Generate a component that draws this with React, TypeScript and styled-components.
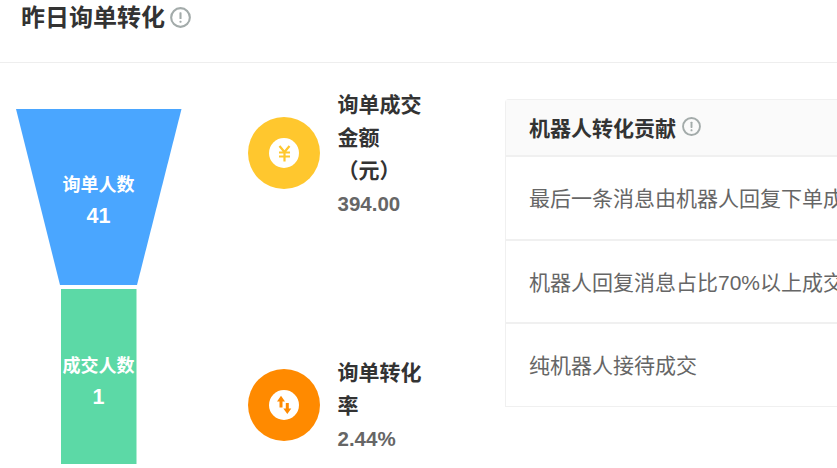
import React from "react";
import styled, { createGlobalStyle } from "styled-components";

const Global = createGlobalStyle`
  html, body { margin: 0; padding: 0; background: #fff; }
  body { font-family: "Liberation Sans", "Noto Sans CJK SC", sans-serif; overflow: hidden; }
`;

const Page = styled.div`
  width: 837px;
  height: 468px;
  overflow: hidden;
  display: flex;
  flex-direction: column;
`;

const Header = styled.header`
  height: 63px;
  box-sizing: border-box;
  border-bottom: 1px solid #eeeeee;
  padding: 0 0 27px 21px;
  display: flex;
  align-items: center;
  gap: 5px;
  flex: none;
`;

const Title = styled.h1`
  margin: 0;
  font-size: 24px;
  line-height: 36px;
  font-weight: 700;
  color: #333333;
`;

const Body = styled.main`
  display: flex;
  align-items: flex-start;
  flex: 1;
  min-height: 0;
`;

const FunnelBox = styled.div`
  position: relative;
  flex: none;
  width: 197px;
  height: 405px;
`;

const FunnelLabel = styled.div<{ $top: number }>`
  position: absolute;
  left: 0;
  width: 197px;
  top: ${(p) => p.$top}px;
  text-align: center;
  color: #fff;
  font-size: 18px;
  line-height: 32px;
  font-weight: 700;
`;

const FunnelCount = styled.div`
  font-size: 21.5px;
  margin-top: -1px;
`;

const Metrics = styled.section`
  flex: none;
  width: 308px;
  padding: 25px 0 0 51px;
  box-sizing: border-box;
  display: flex;
  flex-direction: column;
  gap: 135px;
`;

const Metric = styled.div`
  display: flex;
  align-items: center;
  gap: 17.5px;
`;

const Badge = styled.div<{ $color: string; $lift: number }>`
  flex: none;
  width: 72px;
  height: 72px;
  margin-bottom: ${(p) => p.$lift}px;
  border-radius: 50%;
  background: ${(p) => p.$color};
  display: flex;
  align-items: center;
  justify-content: center;
`;

const BadgeInner = styled.div`
  width: 30px;
  height: 30px;
  border-radius: 50%;
  background: #fff;
  display: flex;
  align-items: center;
  justify-content: center;
`;

const MetricText = styled.div`
  width: 88px;
`;

const MetricName = styled.div`
  font-size: 21px;
  line-height: 33px;
  font-weight: 700;
  color: #333333;
`;

const MetricValue = styled.div`
  font-size: 20.5px;
  line-height: 34px;
  font-weight: 700;
  color: #666666;
`;

const Table = styled.section`
  flex: none;
  width: 420px;
  margin-top: 36px;
  box-sizing: border-box;
  border: 1px solid #f0f0f0;
  border-right: none;
  border-radius: 4px 0 0 0;
`;

const TableHead = styled.div`
  height: 57px;
  box-sizing: border-box;
  background: #fafafa;
  border-bottom: 2px solid #f0f0f0;
  padding: 0 0 2px 23px;
  display: flex;
  align-items: center;
  gap: 6px;
`;

const TableTitle = styled.div`
  font-size: 21px;
  font-weight: 700;
  color: #333333;
`;

const Row = styled.div`
  height: 83px;
  box-sizing: border-box;
  padding: 0 0 2px 23px;
  display: flex;
  align-items: center;
  border-bottom: 2px solid #f0f0f0;
  font-size: 21px;
  color: #666666;
  white-space: nowrap;
  &:nth-child(2) { height: 84px; }
  &:last-child { border-bottom: none; height: 82px; }
`;

const InfoIcon = ({ size }: { size: number }) => (
  <svg width={size} height={size} viewBox="0 0 20 20" fill="none">
    <circle cx="10" cy="10" r="8.9" stroke="#a3abaa" strokeWidth="2" />
    <rect x="9" y="5" width="2" height="6.5" rx="0.6" fill="#a3abaa" />
    <rect x="9" y="13" width="2" height="2" rx="0.6" fill="#a3abaa" />
  </svg>
);

export default function App() {
  return (
    <Page>
      <Global />
      <Header>
        <Title>昨日询单转化</Title>
        <InfoIcon size={21} />
      </Header>
      <Body>
        <FunnelBox>
          <svg width="197" height="405" viewBox="0 0 197 405">
            <polygon points="16,46 181.500,46 137,222 60,222" fill="#4aa6ff" />
            <rect x="61" y="226" width="75.5" height="175" fill="#5cd9a6" />
          </svg>
          <FunnelLabel $top={106}>询单人数<FunnelCount>41</FunnelCount></FunnelLabel>
          <FunnelLabel $top={287}>成交人数<FunnelCount>1</FunnelCount></FunnelLabel>
        </FunnelBox>
        <Metrics>
          <Metric>
            <Badge $color="#ffc72e" $lift={3}>
              <BadgeInner>
                <svg width="15" height="17" viewBox="0 0 15 17" fill="none" stroke="#ffc72e" strokeWidth="2.2">
                  <path d="M2.500 1l5 6 5-6M7.500 7v9.500M2 7.500h11M2 11.500h11" />
                </svg>
              </BadgeInner>
            </Badge>
            <MetricText>
              <MetricName>询单成交金额（元）</MetricName>
              <MetricValue>394.00</MetricValue>
            </MetricText>
          </Metric>
          <Metric>
            <Badge $color="#ff8a00" $lift={2}>
              <BadgeInner>
                <svg width="30" height="30" viewBox="0 0 30 30" fill="#ff8a00">
                  <path d="M12 5.700 8 11.500h2.500v6h3v-6H16z" />
                  <path d="M18.300 24l4-5.500h-2.500V13h-3v5.500h-2.500z" />
                </svg>
              </BadgeInner>
            </Badge>
            <MetricText>
              <MetricName>询单转化率</MetricName>
              <MetricValue>2.44%</MetricValue>
            </MetricText>
          </Metric>
        </Metrics>
        <Table>
          <TableHead>
            <TableTitle>机器人转化贡献</TableTitle>
            <InfoIcon size={19} />
          </TableHead>
          <Row>最后一条消息由机器人回复下单成交</Row>
          <Row>机器人回复消息占比70%以上成交</Row>
          <Row>纯机器人接待成交</Row>
        </Table>
      </Body>
    </Page>
  );
}
